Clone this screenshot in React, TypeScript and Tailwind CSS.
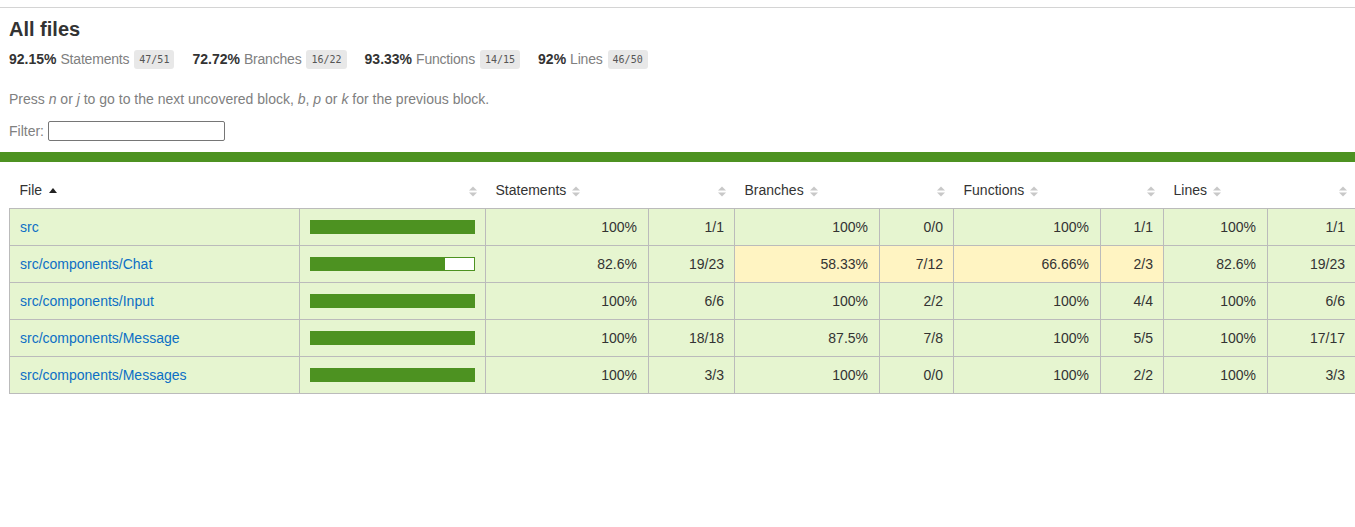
import React from "react";

type Cell = { pct: string; abs: string; medium?: boolean };
type Row = { file: string; fill: number; cells: Cell[] };

const ROWS: Row[] = [
  {
    file: "src",
    fill: 100,
    cells: [
      { pct: "100%", abs: "1/1" },
      { pct: "100%", abs: "0/0" },
      { pct: "100%", abs: "1/1" },
      { pct: "100%", abs: "1/1" },
    ],
  },
  {
    file: "src/components/Chat",
    fill: 82,
    cells: [
      { pct: "82.6%", abs: "19/23" },
      { pct: "58.33%", abs: "7/12", medium: true },
      { pct: "66.66%", abs: "2/3", medium: true },
      { pct: "82.6%", abs: "19/23" },
    ],
  },
  {
    file: "src/components/Input",
    fill: 100,
    cells: [
      { pct: "100%", abs: "6/6" },
      { pct: "100%", abs: "2/2" },
      { pct: "100%", abs: "4/4" },
      { pct: "100%", abs: "6/6" },
    ],
  },
  {
    file: "src/components/Message",
    fill: 100,
    cells: [
      { pct: "100%", abs: "18/18" },
      { pct: "87.5%", abs: "7/8" },
      { pct: "100%", abs: "5/5" },
      { pct: "100%", abs: "17/17" },
    ],
  },
  {
    file: "src/components/Messages",
    fill: 100,
    cells: [
      { pct: "100%", abs: "3/3" },
      { pct: "100%", abs: "0/0" },
      { pct: "100%", abs: "2/2" },
      { pct: "100%", abs: "3/3" },
    ],
  },
];

const STATS = [
  { pct: "92.15%", label: "Statements", frac: "47/51" },
  { pct: "72.72%", label: "Branches", frac: "16/22" },
  { pct: "93.33%", label: "Functions", frac: "14/15" },
  { pct: "92%", label: "Lines", frac: "46/50" },
];

const PCT_W = ["w-[163px]", "w-[145px]", "w-[147px]", "w-[104px]"];
const ABS_W = ["w-[86px]", "w-[74px]", "w-[63px]", "w-[88px]"];

function SortIcon() {
  return (
    <svg width="8" height="11" viewBox="0 0 8 11" className="inline-block">
      <path d="M0 4.5 L4 0.5 L8 4.5 Z" fill="#c8c8c8" />
      <path d="M0 6.5 L4 10.5 L8 6.5 Z" fill="#c8c8c8" />
    </svg>
  );
}

function HeaderCell({ label, colSpan }: { label: string; colSpan: number }) {
  return (
    <th colSpan={colSpan} className="p-0 font-normal text-left">
      <div className="flex items-center h-[36px] pl-[10px] pr-[9px]">
        <span>{label}</span>
        {label !== "File" ? (
          <span className="ml-[6px] mt-[1px]"><SortIcon /></span>
        ) : (
          <svg width="8" height="5" viewBox="0 0 8 5" className="ml-[7px]">
            <path d="M0 5 L4 0 L8 5 Z" fill="#222" />
          </svg>
        )}
        <span className="ml-auto mt-[1px]"><SortIcon /></span>
      </div>
    </th>
  );
}

export default function App() {
  return (
    <div
      className="w-[1355px] h-[527px] bg-white text-[#333] text-[14px] overflow-hidden"
      style={{ fontFamily: '"Liberation Sans", Arial, sans-serif' }}
    >
      <div className="mt-[7px] border-t border-[#d4d4d4]" />
      <div className="px-[9px]">
        <h1 className="text-[20px] font-bold leading-[24px] mt-[9px]">All files</h1>
        <div className="flex items-center mt-[8px] h-[20px] text-[14px]">
          {STATS.map((s) => (
            <div key={s.label} className="flex items-center mr-[18px]">
              <span className="font-bold">{s.pct}</span>
              <span className="ml-[4px] text-[#808080] tracking-[-0.2px]">{s.label}</span>
              <span
                className="ml-[5px] bg-[#e8e8e8] rounded-[3px] px-[5px] h-[19px] leading-[19px] text-[10px] text-[#555]"
                style={{ fontFamily: '"DejaVu Sans Mono", Consolas, monospace' }}
              >
                {s.frac}
              </span>
            </div>
          ))}
        </div>
        <p className="mt-[20px] text-[#808080] leading-[20px]">
          Press <em>n</em> or <em>j</em> to go to the next uncovered block, <em>b</em>, <em>p</em> or{" "}
          <em>k</em> for the previous block.
        </p>
        <div className="flex items-center mt-[12px] h-[20px]">
          <span className="text-[#808080]">Filter:</span>
          <input
            type="text"
            className="ml-[4px] w-[177px] h-[20px] border border-[#767676] rounded-[2px] bg-white"
          />
        </div>
      </div>
      <div className="mt-[11px] h-[10px] bg-[#4d9221]" />
      <div className="pl-[9px] mt-[10px]">
        <table className="table-fixed border-collapse w-[1346px]">
          <colgroup>
            <col className="w-[290px]" />
            <col className="w-[186px]" />
            {PCT_W.map((w, i) => (
              <React.Fragment key={i}>
                <col className={w} />
                <col className={ABS_W[i]} />
              </React.Fragment>
            ))}
          </colgroup>
          <thead>
            <tr>
              <HeaderCell label="File" colSpan={2} />
              <HeaderCell label="Statements" colSpan={2} />
              <HeaderCell label="Branches" colSpan={2} />
              <HeaderCell label="Functions" colSpan={2} />
              <HeaderCell label="Lines" colSpan={2} />
            </tr>
          </thead>
          <tbody>
            {ROWS.map((r) => (
              <tr key={r.file} className="h-[37px]">
                <td className="bg-[#e6f5d0] border border-[#bbbbbb] pl-[10px]">
                  <a href="#" className="text-[#0c6fc5]">{r.file}</a>
                </td>
                <td className="bg-[#e6f5d0] border border-[#bbbbbb] px-[10px]">
                  <div className="flex h-[14px] border border-[#4d9221] bg-white">
                    <div className="h-full bg-[#4d9221]" style={{ width: `${r.fill}%` }} />
                  </div>
                </td>
                {r.cells.map((c, i) => (
                  <React.Fragment key={i}>
                    <td
                      className={`${c.medium ? "bg-[#fff4c2]" : "bg-[#e6f5d0]"} border border-[#bbbbbb] text-right pr-[11px]`}
                    >
                      {c.pct}
                    </td>
                    <td
                      className={`${c.medium ? "bg-[#fff4c2]" : "bg-[#e6f5d0]"} border border-[#bbbbbb] text-right pr-[10px]`}
                    >
                      {c.abs}
                    </td>
                  </React.Fragment>
                ))}
              </tr>
            ))}
          </tbody>
        </table>
      </div>
    </div>
  );
}
